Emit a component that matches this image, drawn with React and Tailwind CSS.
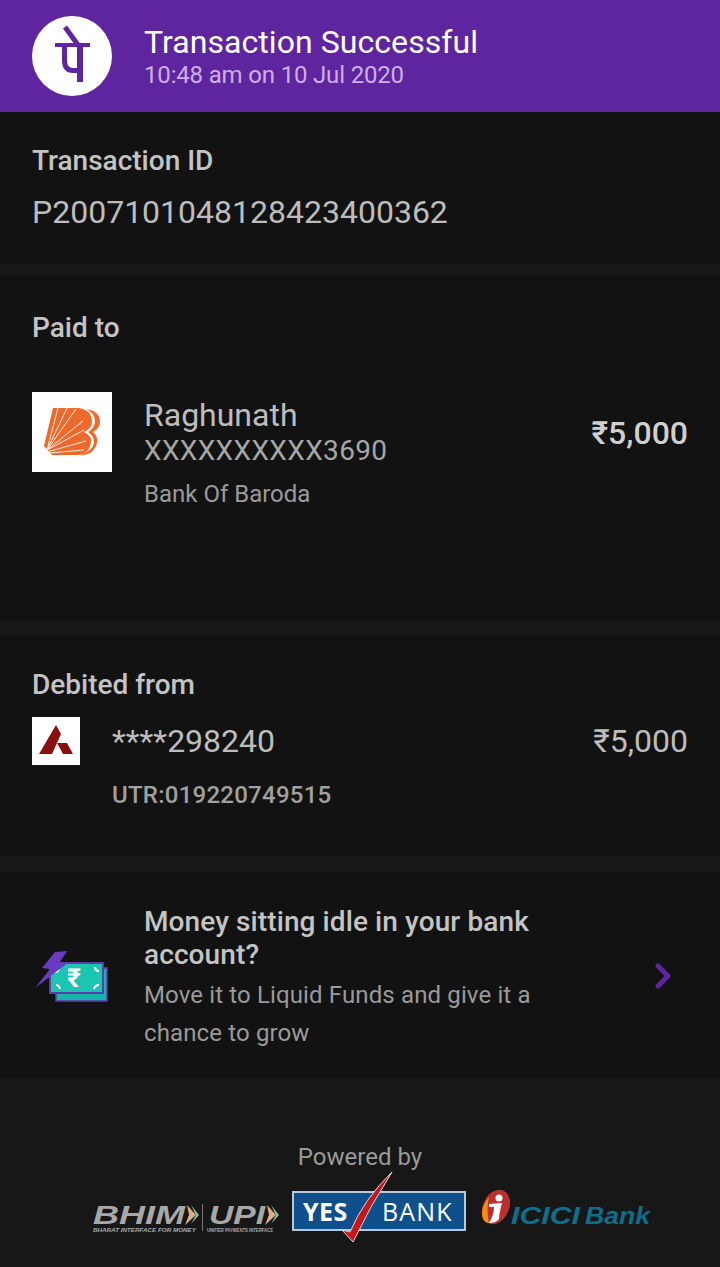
import React from 'react';
import { ChevronRight } from 'lucide-react';

const roboto = { fontFamily: 'Roboto, sans-serif' };
const arial = { fontFamily: '"Liberation Sans", sans-serif' };

function PhonePeLogo() {
  return (
    <div className="w-20 h-20 rounded-full bg-white shrink-0">
      <svg viewBox="0 0 80 80" className="w-20 h-20">
        <g fill="none" stroke="#5f259f">
          <path d="M33 11 L46 29" strokeWidth="5" />
          <path d="M23 29 H58" strokeWidth="4" />
          <path d="M48 30 V66" strokeWidth="6" />
          <path d="M32.5 30 V44 Q32.5 54.5 41 54.5 H48" strokeWidth="5" />
        </g>
      </svg>
    </div>
  );
}

function BarodaLogo() {
  return (
    <div className="w-20 h-20 bg-white shrink-0">
      <svg viewBox="0 0 80 80" className="w-20 h-20">
        <path d="M21 16 H47 Q60 18 60 30 Q60 36 52 40 Q60 44 59 50 Q57 63 45 63 H20 L12 54 Z" fill="#ee6a2c" />
        <path d="M54 17 Q68 19 68 30 Q68 36 61 40 Q66 44 65 51 Q62 63 48 63.5 Q62 58 62 50 Q62 44 56 40 Q63 36 63 29 Q63 21 54 17 Z" fill="#ee6a2c" />
        <g stroke="#ffffff" strokeWidth="0.9" fill="none">
          <path d="M15 58 L26 16" />
          <path d="M15 58 L35 16" />
          <path d="M15 58 L44 17" />
          <path d="M15 58 L51 29" />
          <path d="M15 58 L52 38" />
          <path d="M15 60 L54 49" />
          <path d="M17 61 L52 58" />
        </g>
      </svg>
    </div>
  );
}

function AxisLogo() {
  return (
    <div className="w-12 h-12 bg-white shrink-0">
      <svg viewBox="0 0 48 48" className="w-12 h-12">
        <path d="M7 37 L24 8 L29 17 L20 37 Z" fill="#8a1010" />
        <path d="M25 26 H35 L41 37 H31 Z" fill="#8a1010" />
      </svg>
    </div>
  );
}

function FundsIcon() {
  return (
    <svg viewBox="0 0 76 56" className="w-[76px] h-[56px] shrink-0">
      <rect x="24" y="20" width="51" height="33" fill="#17b5a5" stroke="#5f3aa8" strokeWidth="1.5" />
      <rect x="18" y="15" width="53" height="30" fill="#1cc4b2" stroke="#5f3aa8" strokeWidth="2" />
      <path d="M24 37 Q27 37 28 41 M63 19 Q63 23 67 23 M23 24 Q27 24 27 19 M62 41 Q63 37 67 37" stroke="#ffffff" strokeWidth="2" fill="none" />
      <text x="42" y="39" textAnchor="middle" fill="#ffffff" fontSize="26" fontWeight="700" style={roboto}>₹</text>
      <path d="M23 4 L35 3 L28 14 L37 14 L3 40 L18 21 L10 20 Z" fill="#6a3bc0" />
    </svg>
  );
}

function BhimUpi() {
  return (
    <svg viewBox="-2 -6 191 38" className="w-[191px] h-[38px] shrink-0 mt-[7px] ml-[-2px]" style={arial}>
      <text x="0" y="20" fontSize="26" fontWeight="700" fontStyle="italic" fill="#a8a8a8" textLength="92" lengthAdjust="spacingAndGlyphs">BHIM</text>
      <path d="M94 1 L103 11 L92 21 L96 11 Z" fill="#d9b08c" />
      <path d="M98 1 L106 11 L98 20 L103 11 Z" fill="#8fbf9f" />
      <text x="0" y="28" fontSize="5" fontWeight="700" fontStyle="italic" fill="#aaaaaa" textLength="103" lengthAdjust="spacingAndGlyphs">BHARAT INTERFACE FOR MONEY</text>
      <path d="M109.5 0 V27" stroke="#777777" strokeWidth="1" />
      <text x="116" y="20" fontSize="26" fontWeight="700" fontStyle="italic" fill="#a8a8a8" textLength="56" lengthAdjust="spacingAndGlyphs">UPI</text>
      <path d="M174 1 L183 11 L172 21 L176 11 Z" fill="#d9b08c" />
      <path d="M178 1 L186 11 L178 20 L183 11 Z" fill="#8fbf9f" />
      <text x="114" y="28" fontSize="5" fontWeight="700" fill="#aaaaaa" textLength="66" lengthAdjust="spacingAndGlyphs">UNIFIED PAYMENTS INTERFACE</text>
    </svg>
  );
}

function YesBank() {
  return (
    <div className="relative w-[174px] h-[40px] bg-[#0e4f8c] border-2 border-[#b9c9d9] flex items-center shrink-0" style={{ fontFamily: '"Open Sans", sans-serif' }}>
      <span className="ml-[9px] text-white text-[25px] leading-none font-bold tracking-[0.5px]">YES</span>
      <span className="ml-[34px] text-white text-[25px] leading-none font-medium tracking-[1.2px]">BANK</span>
      <svg viewBox="0 -22 104 76" className="absolute left-[-2px] top-[-24px] w-[104px] h-[76px]">
        <path d="M50 39 L61 51 Q78 15 100 -19 Q72 8 58 41 Z" fill="#c4161c" stroke="#dddddd" strokeWidth="1" />
      </svg>
    </div>
  );
}

function IciciBank() {
  return (
    <svg viewBox="0 -2 176 42" className="w-[176px] h-[42px] shrink-0 ml-[14px] mt-[-3px]" style={arial}>
      <ellipse cx="16" cy="17" rx="13" ry="18" transform="rotate(25 16 17)" fill="#b8312f" />
      <path d="M3 29 Q-1 19 9 7 Q6 19 9 33 Q5 33 3 29 Z" fill="#f28c1e" />
      <circle cx="19" cy="8" r="3.5" fill="#ffffff" />
      <path d="M9 14 L22 13 Q19 24 19 29 Q16 33 9 33 Q14 25 14 17 L9 17 Z" fill="#ffffff" />
      <text x="31" y="34" fontSize="24" fontWeight="700" fontStyle="italic" fill="#0f6f8a" textLength="69" lengthAdjust="spacingAndGlyphs">ICICI</text>
      <text x="105" y="34" fontSize="24" fontWeight="700" fontStyle="italic" fill="#0f6f8a" textLength="65" lengthAdjust="spacingAndGlyphs">Bank</text>
    </svg>
  );
}

export default function App() {
  return (
    <div className="w-[720px] h-[1267px] bg-[#121212] overflow-hidden flex flex-col" style={roboto}>
      {/* Header */}
      <div className="h-28 bg-[#5f259f] flex items-center pl-8 gap-8 shrink-0">
        <PhonePeLogo />
        <div className="flex flex-col">
          <span className="text-white text-[32px] leading-9 tracking-[0.06px]">Transaction Successful</span>
          <span className="text-[#cdaee8] text-2xl leading-7 mt-px tracking-[-0.17px]">10:48 am on 10 Jul 2020</span>
        </div>
      </div>

      {/* Transaction ID */}
      <div className="h-[152px] px-8 pt-[33px] shrink-0">
        <div className="text-[#c4c4c4] text-[28px] leading-8 font-medium">Transaction ID</div>
        <div className="text-[#bdbdbd] text-[32px] leading-9 mt-[17px]">P2007101048128423400362</div>
      </div>
      <div className="h-3 bg-[#171717] shrink-0" />

      {/* Paid to */}
      <div className="h-[344px] px-8 pt-9 shrink-0">
        <div className="text-[#c4c4c4] text-[28px] leading-8 font-medium">Paid to</div>
        <div className="flex items-start gap-8 mt-[48px]">
          <BarodaLogo />
          <div className="flex flex-col flex-1">
            <span className="text-[#bdbdbd] text-[32px] leading-9 mt-[5px]">Raghunath</span>
            <span className="text-[#a6a6a6] text-[28px] leading-8 mt-[2px] tracking-[0.35px]">XXXXXXXXXX3690</span>
            <span className="text-[#9a9a9a] text-2xl leading-7 mt-[13px]">Bank Of Baroda</span>
          </div>
          <span className="text-[#d0d0d0] text-[32px] leading-9 font-medium mt-[23px]">₹5,000</span>
        </div>
      </div>
      <div className="h-4 bg-[#171717] shrink-0" />

      {/* Debited from */}
      <div className="h-[220px] px-8 pt-[33px] shrink-0">
        <div className="text-[#c4c4c4] text-[28px] leading-8 font-medium">Debited from</div>
        <div className="flex items-start gap-8 mt-[16px]">
          <AxisLogo />
          <div className="flex flex-col flex-1">
            <span className="text-[#bdbdbd] text-[32px] leading-9 mt-[6px]">****298240</span>
            <span className="text-[#a0a0a0] text-2xl leading-7 mt-[22px] font-medium tracking-[0.25px]">UTR:019220749515</span>
          </div>
          <span className="text-[#bdbdbd] text-[32px] leading-9 mt-[6px]">₹5,000</span>
        </div>
      </div>
      <div className="h-4 bg-[#171717] shrink-0" />

      {/* Liquid funds promo */}
      <div className="h-[206px] flex items-center pl-8 pr-[37px] shrink-0">
        <div className="w-[112px] shrink-0 pt-[2px]"><FundsIcon /></div>
        <div className="flex-1 flex flex-col pt-[6px]">
          <span className="text-[#c4c4c4] text-[28px] leading-[33px] font-medium tracking-[0.1px]">Money sitting idle in your bank<br />account?</span>
          <span className="text-[#9a9a9a] text-2xl leading-[38px] mt-[5px] tracking-[0.13px]">Move it to Liquid Funds and give it a<br />chance to grow</span>
        </div>
        <ChevronRight className="w-10 h-10 text-[#5f259f] shrink-0 mt-[2px]" strokeWidth={3} />
      </div>

      {/* Footer */}
      <div className="flex-1 bg-[#171717] flex flex-col items-center pt-[65px]">
        <span className="text-[#9a9a9a] text-2xl leading-7">Powered by</span>
        <div className="self-stretch flex items-start mt-[20px] pl-[93px]">
          <BhimUpi />
          <div className="w-[10px] shrink-0" />
          <YesBank />
          <IciciBank />
        </div>
      </div>
    </div>
  );
}
